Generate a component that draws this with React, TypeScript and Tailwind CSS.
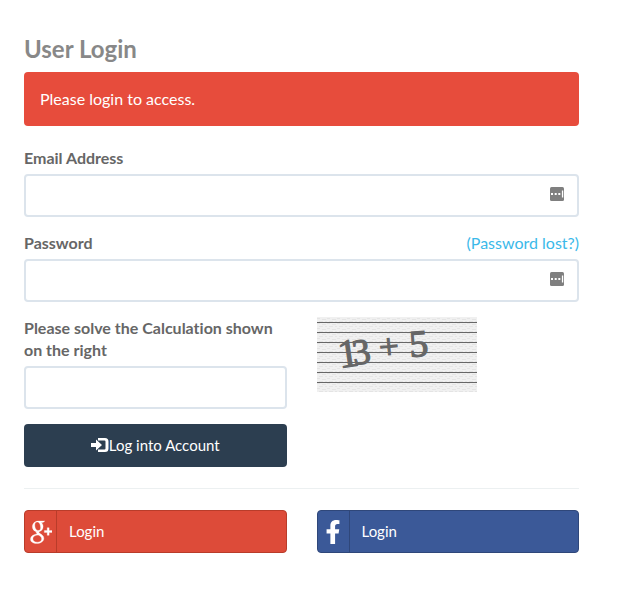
import type { ReactNode } from 'react';
import { FaFacebookF } from 'react-icons/fa';

const inputClass =
  'block h-[43px] w-full rounded border-2 border-[#dce4ec] bg-white px-4 text-base outline-none focus:border-[#2c3e50]';
const labelClass = 'mb-[5px] block font-bold';

function LoginIcon() {
  return (
    <svg width="18" height="16" viewBox="0 0 18 16" fill="#fff" aria-hidden="true">
      <path d="M0 6h5V2.600L11 8l-6 5.400V10H0z" />
      <path d="M7 1h7a3.500 3.500 0 0 1 3.500 3.500v7A3.500 3.500 0 0 1 14 15H7v-2.500h6.500a1 1 0 0 0 1-1v-7a1 1 0 0 0-1-1H7z" />
    </svg>
  );
}

function GooglePlusIcon() {
  return (
    <svg width="22" height="24" viewBox="0 0 23 25" fill="#fff" stroke="#fff" strokeWidth=".3" aria-hidden="true">
      {/* top bowl and ear */}
      <path
        fillRule="evenodd"
        d="M8.500 1H15.500L13.600 2.500H11.700C13 3.500 13.700 5 13.700 6.700C13.700 10.200 11.200 12.200 8 12.200C4.800 12.200 2.500 10 2.500 6.900C2.500 3.500 5.200 1 8.500 1ZM7.500 2.100C5.800 2.100 5 3.400 5 5.200C5 8 6.300 11 8.600 11C10.400 11 11.100 9.700 11.100 7.900C11.100 5 9.800 2.100 7.500 2.100Z"
      />
      {/* link between the bowls */}
      <path d="M6.800 11.600L9.800 11.700C8.800 12.600 9.300 13.200 10.200 13.900L12.200 15.300L9.200 15.600C7.200 14.400 5.600 13.300 6.800 11.600Z" />
      {/* bottom bowl */}
      <path
        fillRule="evenodd"
        d="M9.200 14.400C12.300 14.900 14.500 16.500 14.500 19C14.500 22.300 11.300 24.500 6.900 24.500C3.200 24.500 .5 22.900 .5 20.100C.5 16.700 4.300 14.500 9.200 14.400ZM8.700 15.700C5.300 15.800 3 17.200 3 19.500C3 21.700 4.900 23.100 7.700 23.100C10.500 23.100 12.200 21.900 12.200 19.800C12.200 17.900 10.900 16.800 8.700 15.700Z"
      />
      <path d="M18 8h2v3h3v2h-3v3h-2v-3h-3v-2h3z" />
    </svg>
  );
}

// Little badge a password manager leaves in the field
function ManagerBadge() {
  return (
    <svg
      className="pointer-events-none absolute right-[15px] top-[13px]"
      width="14"
      height="14"
      viewBox="0 0 14 14"
      aria-hidden="true"
    >
      <rect width="14" height="14" rx="1.500" fill="#7f7f7f" />
      <path d="M1 6h2v2H1zM4.700 6h2v2h-2zM8.300 6h2v2h-2zM11.900 3.500h1.300v7h-1.300z" fill="#fff" />
    </svg>
  );
}

function Captcha() {
  return (
    <svg width="160" height="75" viewBox="0 0 160 75" role="img" aria-label="13 + 5">
      <defs>
        <pattern id="weave" width="10" height="5" patternUnits="userSpaceOnUse">
          <rect width="10" height="5" fill="#f0f0f0" />
          <path d="M0 1.500h3M5 2.500h4M2 4.500h4M8 4.500h2" stroke="#e4e4e4" />
        </pattern>
      </defs>
      <rect width="160" height="75" fill="url(#weave)" />
      {[5, 15, 25, 35, 45, 55, 65].map((y) => (
        <rect key={y} y={y} width="160" height="1" fill="#666" />
      ))}
      <g fill="#666" stroke="#666" strokeWidth="1.200" fontFamily="'Liberation Serif', serif" fontSize="38">
        <text x="23" y="51" fontSize="40" transform="rotate(-8 23 51)">1</text>
        <text x="37" y="48" fontSize="36" transform="rotate(-8 37 48)">3</text>
        <text x="63" y="42" fontSize="35" transform="rotate(-5 63 42)">+</text>
        <text x="93" y="40" fontSize="38" transform="rotate(-4 93 40)">5</text>
      </g>
    </svg>
  );
}

interface SocialButtonProps {
  className: string;
  iconClassName: string;
  icon: ReactNode;
}

function SocialButton({ className, iconClassName, icon }: SocialButtonProps) {
  return (
    <button
      type="button"
      className={`flex h-[43px] w-full items-center rounded border text-left text-[15px] text-white ${className}`}
    >
      <span className={`flex h-full w-8 shrink-0 items-center justify-center border-r ${iconClassName}`}>{icon}</span>
      <span className="pb-0.5 pl-3">Login</span>
    </button>
  );
}

export default function App() {
  return (
    <main className="bg-white pb-12 pl-6 pr-[54px] pt-9 font-['Lato',sans-serif] text-base leading-[22px] text-[#666] [font-variant-ligatures:none]">
      <h1 className="mb-2.5 text-2xl font-bold leading-[26px] text-[#888]">User Login</h1>
      <div role="alert" className="mb-[21px] rounded bg-[#e74c3c] p-4 text-white">
        Please login to access.
      </div>

      <form onSubmit={(e) => e.preventDefault()}>
        <div className="mb-[15px]">
          <label htmlFor="email" className={labelClass}>Email Address</label>
          <div className="relative">
            <input id="email" type="email" className={inputClass} />
            <ManagerBadge />
          </div>
        </div>

        <div className="mb-[15px]">
          <div className="flex justify-between">
            <label htmlFor="password" className={labelClass}>Password</label>
            <a href="#lost" className="text-[#3bb9e9]">(Password lost?)</a>
          </div>
          <div className="relative">
            <input id="password" type="password" className={inputClass} />
            <ManagerBadge />
          </div>
        </div>

        <div className="mb-[15px] grid grid-cols-2 gap-[30px]">
          <div>
            <label htmlFor="captcha" className={labelClass}>Please solve the Calculation shown on the right</label>
            <input id="captcha" type="text" className={inputClass} />
          </div>
          <Captcha />
        </div>

        <div className="grid grid-cols-2 gap-[30px]">
          <button
            type="submit"
            className="flex h-[43px] items-center justify-center rounded bg-[#2c3e50] pb-0.5 text-[15px] text-white"
          >
            <LoginIcon />
            Log into Account
          </button>
        </div>
      </form>

      <hr className="my-[21px] border-[#ecf0f1]" />

      <div className="grid grid-cols-2 gap-[30px]">
        <SocialButton
          className="border-[#b93c2a] bg-[#dd4b39]"
          iconClassName="border-[#b93c2a]"
          icon={<GooglePlusIcon />}
        />
        <SocialButton
          className="border-[#2f477a] bg-[#3b5998]"
          iconClassName="border-[#2f477a]"
          icon={<FaFacebookF size={24} />}
        />
      </div>
    </main>
  );
}
